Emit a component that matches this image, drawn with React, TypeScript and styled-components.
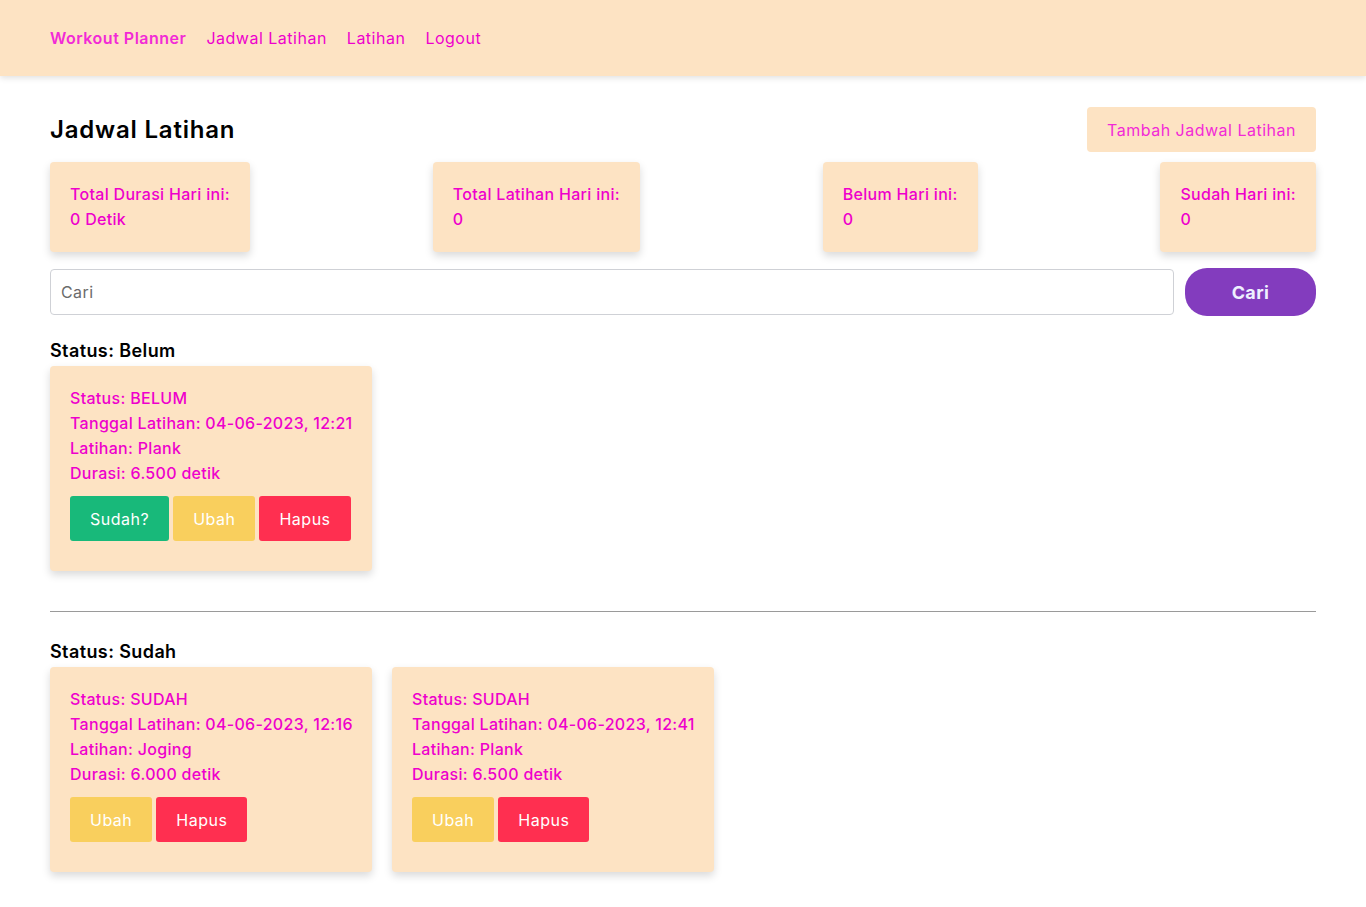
import React from 'react';
import styled, { createGlobalStyle } from 'styled-components';

const GlobalStyle = createGlobalStyle`
  html, body {
    margin: 0;
    padding: 0;
    background: #fff;
    font-family: Inter, "Open Sans", "Liberation Sans", sans-serif;
    color: #000;
  }
  * { box-sizing: border-box; }
`

const peach = '#fde3c3';
const pink = '#ee00cc';

const Navbar = styled.nav`
  height: 76px;
  background: ${peach};
  box-shadow: 0 2px 6px rgba(0, 0, 0, 0.12);
  display: flex;
  align-items: center;
  gap: 20px;
  padding: 0 50px;
`

const NavLink = styled.a<{ $brand?: boolean }>`
  font-size: 16px;
  letter-spacing: 0.5px;
  color: ${p => p.$brand ? '#f22ad6' : pink};
  font-weight: ${p => p.$brand ? 600 : 400};
  text-decoration: none;
  cursor: pointer;
`

const Main = styled.main`
  padding: 31px 50px 40px;
`

const HeaderRow = styled.div`
  display: flex;
  justify-content: space-between;
  align-items: center;
`

const Title = styled.h1`
  margin: 0;
  font-size: 24px;
  font-weight: 600;
  letter-spacing: 0.8px;
`

const AddButton = styled.button`
  height: 45px;
  padding: 0 20px;
  border: none;
  border-radius: 4px;
  background: ${peach};
  color: #f22ad6;
  font-family: inherit;
  font-size: 16px;
  font-weight: 400;
  letter-spacing: 0.5px;
  cursor: pointer;
`

const StatRow = styled.div`
  display: flex;
  justify-content: space-between;
  margin-top: 10px;
`

const Card = styled.div<{ $fixed?: boolean }>`
  background: ${peach};
  border-radius: 4px;
  box-shadow: 0 4px 8px rgba(0, 0, 0, 0.15);
  padding: ${p => p.$fixed ? '20px 20px 30px' : '20px'};
  width: ${p => p.$fixed ? '322px' : 'auto'};
  color: ${pink};
  font-size: 16px;
  font-weight: 500;
  line-height: 25px;
  letter-spacing: 0.3px;
`

const Line = styled.div`
  white-space: nowrap;
`

const SearchRow = styled.form`
  display: flex;
  gap: 11px;
  align-items: center;
  margin-top: 16px;
`

const SearchInput = styled.input`
  flex: 1;
  height: 46px;
  border: 1px solid #cfd1d6;
  border-radius: 4px;
  padding: 0 10px;
  font-family: inherit;
  font-size: 16px;
  letter-spacing: 0.4px;
  color: #333;
  &::placeholder { color: #6b6b6b; }
`

const SearchButton = styled.button`
  width: 131px;
  height: 48px;
  border: none;
  border-radius: 22px;
  background: #833cbe;
  color: #eef0ff;
  font-family: inherit;
  font-size: 18px;
  font-weight: 700;
  letter-spacing: 0.4px;
  cursor: pointer;
`

const SectionTitle = styled.h2`
  margin: 22px 0 2px;
  font-size: 18px;
  font-weight: 600;
  line-height: 26px;
  letter-spacing: 0.4px;
`

const CardList = styled.div`
  display: flex;
  gap: 20px;
`

const Actions = styled.div`
  display: flex;
  gap: 4px;
  margin-top: 10px;
`

const ActionButton = styled.button<{ $kind: 'success' | 'warning' | 'danger' }>`
  height: 45px;
  padding: 0 20px;
  border: none;
  border-radius: 3px;
  font-family: inherit;
  font-size: 16px;
  font-weight: 400;
  letter-spacing: 0.5px;
  color: #fff;
  cursor: pointer;
  background: ${p => p.$kind === 'success' ? '#18b97a' : p.$kind === 'warning' ? '#f9cf5d' : '#ff2f50'};
`

const Divider = styled.hr`
  margin: 40px 0 27px;
  border: none;
  border-top: 1px solid #9a9a9a;
`

interface Jadwal {
  status: string,
  tanggal: string,
  latihan: string,
  durasi: string
}

const belum: Jadwal[] = [
  { status: 'BELUM', tanggal: '04-06-2023, 12:21', latihan: 'Plank', durasi: '6.500' },
]

const sudah: Jadwal[] = [
  { status: 'SUDAH', tanggal: '04-06-2023, 12:16', latihan: 'Joging', durasi: '6.000' },
  { status: 'SUDAH', tanggal: '04-06-2023, 12:41', latihan: 'Plank', durasi: '6.500' },
]

const stats = [
  { label: 'Total Durasi Hari ini:', value: '0 Detik' },
  { label: 'Total Latihan Hari ini:', value: '0' },
  { label: 'Belum Hari ini:', value: '0' },
  { label: 'Sudah Hari ini:', value: '0' },
]

const JadwalCard = ({ item }: { item: Jadwal }) => (
  <Card $fixed>
    <Line>Status: {item.status}</Line>
    <Line>Tanggal Latihan: {item.tanggal}</Line>
    <Line>Latihan: {item.latihan}</Line>
    <Line>Durasi: {item.durasi} detik</Line>
    <Actions>
      {item.status === 'BELUM' && <ActionButton $kind="success">Sudah?</ActionButton>}
      <ActionButton $kind="warning">Ubah</ActionButton>
      <ActionButton $kind="danger">Hapus</ActionButton>
    </Actions>
  </Card>
)

export default function App() {
  return (
    <>
      <GlobalStyle />
      <Navbar>
        <NavLink $brand>Workout Planner</NavLink>
        <NavLink>Jadwal Latihan</NavLink>
        <NavLink>Latihan</NavLink>
        <NavLink>Logout</NavLink>
      </Navbar>
      <Main>
        <HeaderRow>
          <Title>Jadwal Latihan</Title>
          <AddButton>Tambah Jadwal Latihan</AddButton>
        </HeaderRow>
        <StatRow>
          {stats.map(s => (
            <Card key={s.label}>
              <Line>{s.label}</Line>
              <Line>{s.value}</Line>
            </Card>
          ))}
        </StatRow>
        <SearchRow onSubmit={e => e.preventDefault()}>
          <SearchInput placeholder="Cari" />
          <SearchButton type="submit">Cari</SearchButton>
        </SearchRow>
        <SectionTitle>Status: Belum</SectionTitle>
        <CardList>
          {belum.map((j, i) => <JadwalCard key={i} item={j} />)}
        </CardList>
        <Divider />
        <SectionTitle>Status: Sudah</SectionTitle>
        <CardList>
          {sudah.map((j, i) => <JadwalCard key={i} item={j} />)}
        </CardList>
      </Main>
    </>
  );
}
